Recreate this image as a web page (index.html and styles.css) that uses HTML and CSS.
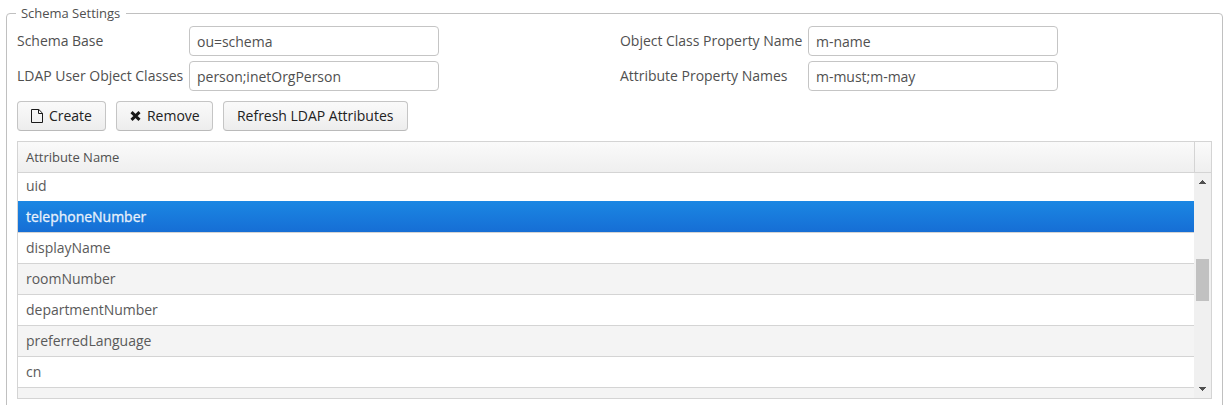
FILE: index.html
```html
<!DOCTYPE html>
<html lang="en">
<head>
<meta charset="utf-8">
<title>Schema Settings</title>
<link rel="stylesheet" href="styles.css">
</head>
<body>
<fieldset class="panel">
  <legend class="panel-title">Schema Settings</legend>
  <div class="form">
    <label class="label" for="base">Schema Base</label>
    <input class="field" id="base" value="ou=schema">
    <label class="label" for="ocp">Object Class Property Name</label>
    <input class="field" id="ocp" value="m-name">
    <label class="label" for="uoc">LDAP User Object Classes</label>
    <input class="field" id="uoc" value="person;inetOrgPerson">
    <label class="label" for="apn">Attribute Property Names</label>
    <input class="field" id="apn" value="m-must;m-may">
  </div>
  <div class="toolbar">
    <button class="button create"><svg class="icon-file" width="12" height="14" viewBox="0 0 12 14"><path d="M.5.5h7.3l3.7 3.7v9.3H.5zM7.5.5v4h4" fill="none" stroke="#191919"/></svg>Create</button>
    <button class="button remove"><svg class="icon-x" width="11" height="10" viewBox="0 0 11 10"><path d="M1.5 1.2l8 7.6M9.5 1.2l-8 7.6" fill="none" stroke="#191919" stroke-width="3"/></svg>Remove</button>
    <button class="button refresh">Refresh LDAP Attributes</button>
  </div>
  <div class="table">
    <div class="table-head"><div class="head-cell">Attribute Name</div></div>
    <div class="table-body">
      <div class="rows">
        <div class="row first">uid</div>
        <div class="row selected">telephoneNumber</div>
        <div class="row">displayName</div>
        <div class="row odd">roomNumber</div>
        <div class="row">departmentNumber</div>
        <div class="row odd">preferredLanguage</div>
        <div class="row">cn</div>
        <div class="row odd"></div>
      </div>
      <div class="scrollbar">
        <svg class="arrow" width="7" height="4" viewBox="0 0 7 4" shape-rendering="crispEdges"><path d="M3 0h1v1h1v1h1v1h1v1H0V3h1V2h1V1h1z" fill="#505050"/></svg>
        <div class="thumb"></div>
        <svg class="arrow" width="7" height="4" viewBox="0 0 7 4" shape-rendering="crispEdges"><path d="M0 0h7v1H6v1H5v1H4v1H3V3H2V2H1V1H0z" fill="#505050"/></svg>
      </div>
    </div>
  </div>
</fieldset>
</body>
</html>
```
FILE: styles.css
```css
* { box-sizing: border-box; }
body {
  margin: 0;
  height: 405px;
  overflow: hidden;
  background: #fff;
  font: 14px/20px "Open Sans", sans-serif;
  letter-spacing: -0.02px;
  color: #505050;
}
.panel {
  width: 1217px;
  height: 420px;
  margin: 4px 0 0 6px;
  padding: 3px 10px 0;
  border: 1px solid #c0c0c0;
  border-radius: 4px;
  min-width: 0;
}
.panel-title {
  height: 19px;
  margin-left: -1px;
  padding: 0 6px 0 5px;
  font-size: 13px;
  line-height: 19px;
}
.form {
  display: grid;
  grid-template-columns: 172px 431px 188px 250px;
  grid-auto-rows: 30px;
  row-gap: 5px;
}
.label { line-height: 30px; white-space: nowrap; }
.field {
  width: 250px;
  height: 30px;
  padding: 1px 7px 0;
  border: 1px solid #c5c5c5;
  border-radius: 4px;
  background: #fff;
  font: inherit;
  letter-spacing: inherit;
  color: inherit;
  outline: 0;
}
.toolbar { display: flex; gap: 10px; margin: 10px 0; }
.button {
  display: flex;
  align-items: center;
  height: 30px;
  padding: 0 13px;
  border: 1px solid #c5c5c5;
  border-bottom-color: #bababa;
  border-radius: 4px;
  background: linear-gradient(#fafafa, #ededed);
  font: inherit;
  letter-spacing: inherit;
  color: #222;
  white-space: nowrap;
}
.create { width: 89px; }
.remove { width: 97px; }
.refresh { width: 185px; }
.icon-file { flex: none; margin-right: 6px; }
.icon-x { flex: none; margin-right: 6px; }
.table {
  width: 1195px;
  height: 258px;
  border: 1px solid #d4d4d4;
}
.table-head {
  height: 31px;
  border-bottom: 1px solid #d4d4d4;
  background: linear-gradient(#fafafa, #efefef);
  font-size: 13px;
}
.head-cell {
  width: 1177px;
  height: 30px;
  padding-left: 8px;
  border-right: 1px solid #d4d4d4;
  line-height: 30px;
}
.table-body { display: flex; height: 225px; }
.rows { width: 1176px; overflow: hidden; color: #5a5a5a; }
.row {
  height: 31px;
  padding-left: 8px;
  border-top: 1px solid #d4d4d4;
  line-height: 30px;
}
.first { height: 28px; border-top: 0; line-height: 26px; }
.odd { background: #f4f4f4; }
.selected {
  border-top: 0;
  background: linear-gradient(#1b87e3, #166ed5);
  color: #e8f1fb;
  line-height: 31px;
  -webkit-text-stroke: .3px #e8f1fb;
}
.scrollbar {
  display: flex;
  flex-direction: column;
  align-items: center;
  width: 17px;
  padding: 7px 0;
  background: #f0f0f0;
}
.thumb { width: 13px; height: 42px; margin: 75px 0 86px; background: #c1c1c1; }
.arrow { flex: none; }
```
